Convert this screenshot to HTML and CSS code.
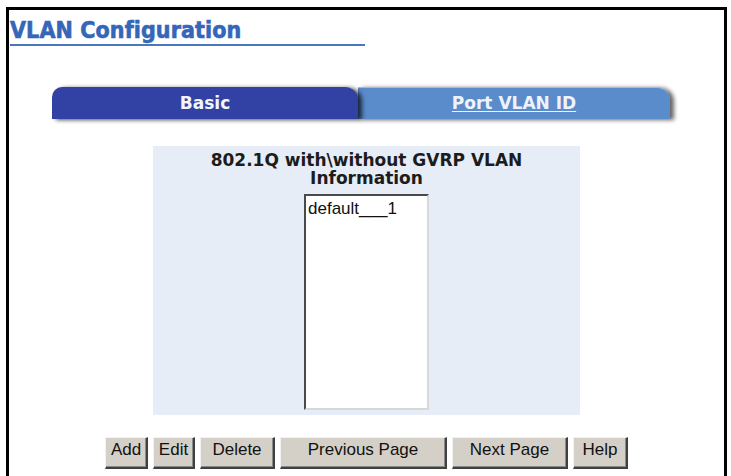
FILE: index.html
```html
<!DOCTYPE html>
<html>
<head>
<meta charset="utf-8">
<title>VLAN Configuration</title>
<link rel="stylesheet" href="styles.css">
</head>
<body>
<div class="frame">
  <div class="title"><span class="title-text">VLAN Configuration</span></div>
  <div class="tabs">
    <div class="tab tab-basic">Basic</div>
    <div class="tab tab-port"><span class="tab-link">Port VLAN ID</span></div>
  </div>
  <div class="panel">
    <div class="panel-heading">802.1Q with\without GVRP VLAN Information</div>
    <div class="listbox">
      <div class="option">default___1</div>
    </div>
  </div>
  <div class="buttons">
    <button class="btn btn-add">Add</button>
    <button class="btn btn-edit">Edit</button>
    <button class="btn btn-delete">Delete</button>
    <button class="btn btn-prev">Previous Page</button>
    <button class="btn btn-next">Next Page</button>
    <button class="btn btn-help">Help</button>
  </div>
</div>
</body>
</html>
```

FILE: styles.css
```css
html, body {
  margin: 0;
  padding: 0;
  background: #ffffff;
  overflow: hidden;
}

body {
  width: 731px;
  height: 476px;
}

.frame {
  box-sizing: border-box;
  margin: 7px 0 0 6px;
  width: 721px;
  height: 469px;
  border-top: 3px solid #000000;
  border-left: 3px solid #000000;
  border-right: 3px solid #000000;
  background: #ffffff;
}

.title {
  box-sizing: border-box;
  margin: 7px 0 0 1px;
  width: 355px;
  height: 29px;
  border-bottom: 2px solid #4a76bf;
}

.title-text {
  display: block;
  font-family: "DejaVu Sans Condensed", "DejaVu Sans", sans-serif;
  font-stretch: condensed;
  font-weight: bold;
  font-size: 23px;
  line-height: 27px;
  color: #3466b9;
  letter-spacing: 0.1px;
  -webkit-text-stroke: 0.6px #3466b9;
}

.tabs {
  display: flex;
  margin: 41px 0 0 43px;
  height: 32px;
}

.tab {
  box-sizing: border-box;
  height: 32px;
  font-family: "DejaVu Sans", Verdana, sans-serif;
  font-weight: bold;
  font-size: 17px;
  line-height: 32px;
  text-align: center;
  color: #f4f6fb;
}

.tab-basic {
  position: relative;
  z-index: 2;
  width: 306px;
  background: #3142a4;
  border-radius: 10px 13px 0 0;
  box-shadow: 4px 1px 4px rgba(0, 0, 0, 0.7);
}

.tab-port {
  position: relative;
  z-index: 1;
  width: 312px;
  background: #5a8bcb;
  border-radius: 0 13px 0 0;
  box-shadow: 4px 1px 4px rgba(0, 0, 0, 0.6);
  border-top: 1px solid #9dbde6;
  line-height: 30px;
}

.tab-link {
  color: #eef3fb;
  text-decoration: underline;
  text-underline-offset: 2px;
}

.panel {
  box-sizing: border-box;
  width: 427px;
  height: 269px;
  margin: 27px auto 0 auto;
  padding-top: 6px;
  background: #e6edf6;
}

.panel-heading {
  width: 340px;
  margin: 0 auto;
  font-family: "DejaVu Sans", Verdana, sans-serif;
  font-weight: bold;
  font-size: 17px;
  line-height: 17.5px;
  text-align: center;
  color: #1c1c1c;
}

.listbox {
  box-sizing: border-box;
  width: 125px;
  height: 216px;
  margin: 7px auto 0 auto;
  background: #ffffff;
  border-style: solid;
  border-width: 2px;
  border-color: #4a4a4a #d8d8d8 #d8d8d8 #4a4a4a;
}

.option {
  padding: 3px 0 0 2px;
  font-family: "Liberation Sans", Arial, sans-serif;
  font-size: 17px;
  line-height: 19px;
  color: #111111;
}

.buttons {
  display: flex;
  justify-content: center;
  gap: 5px;
  margin-top: 22px;
}

.btn {
  box-sizing: border-box;
  height: 32px;
  margin: 0;
  padding: 0 0 6px 0;
  font-family: "Liberation Sans", Arial, sans-serif;
  font-size: 17px;
  line-height: 19px;
  color: #111111;
  background: #d4d0c8;
  border-style: solid;
  border-width: 1px 2px 2px 1px;
  border-color: #f2f2f2 #404040 #404040 #f2f2f2;
  box-shadow: inset -1px -1px 0 #8a8a8a;
  border-radius: 0;
}

.btn-add { width: 43px; }
.btn-edit { width: 42px; }
.btn-delete { width: 75px; }
.btn-prev { width: 167px; }
.btn-next { width: 116px; }
.btn-help { width: 55px; }
```
